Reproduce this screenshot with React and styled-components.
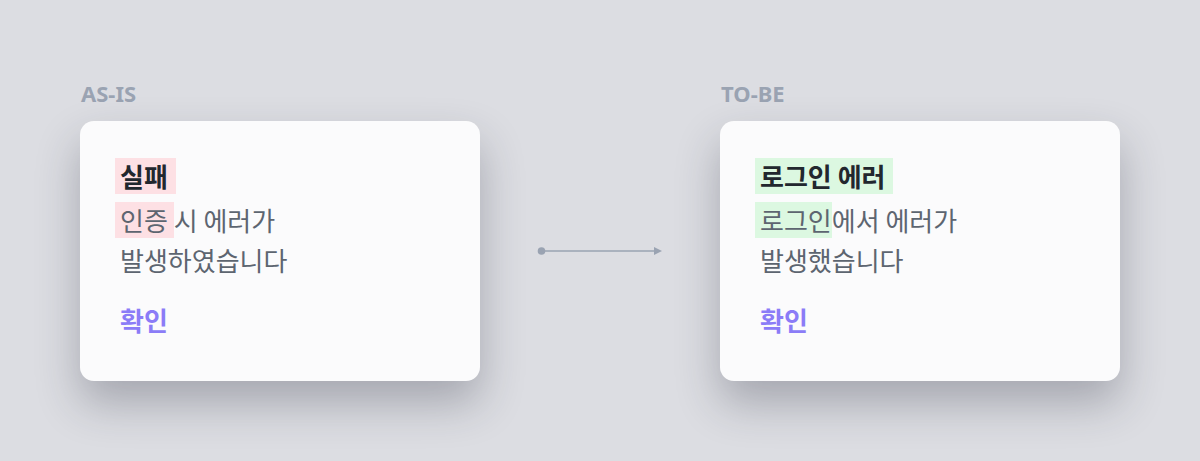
import React from "react";
import styled, { createGlobalStyle } from "styled-components";

const GlobalStyle = createGlobalStyle`
  html, body {
    margin: 0;
    padding: 0;
    background: #dcdde2;
  }
  body {
    font-family: "Noto Sans", "Noto Sans CJK KR", sans-serif;
  }
`;

const Page = styled.div`
  width: 1200px;
  height: 461px;
  box-sizing: border-box;
  padding: 79px 80px 0;
  display: flex;
  align-items: flex-start;
  background: #dcdde2;
`;

const Column = styled.div`
  width: 400px;
  display: flex;
  flex-direction: column;
`;

const Label = styled.div`
  font-family: "Noto Sans", sans-serif;
  font-size: 22px;
  font-weight: 700;
  line-height: 28px;
  color: #9aa3b2;
  margin-bottom: 14px;
  padding-left: 1px;
`;

const Card = styled.div`
  height: 260px;
  box-sizing: border-box;
  padding: 37px 35px 0;
  background: #fbfbfc;
  border-radius: 14px;
  box-shadow: 0 22px 44px rgba(40, 44, 60, 0.3);
  font-family: "Noto Sans CJK KR", "Noto Sans", sans-serif;
`;

const Title = styled.div`
  font-size: 26px;
  font-weight: 700;
  color: #22272e;
  line-height: 36px;
  height: 36px;
`;

const Mark = styled.span`
  display: inline-block;
  line-height: 36px;
  padding: 0 ${(p) => p.$right}px 0 5px;
  background: ${(p) => (p.$tone === "green" ? "#dcf8e1" : "#fde0e4")};
`;

const Body = styled.div`
  margin-top: 6px;
  font-size: 26px;
  font-weight: 400;
  color: #5d6570;
  line-height: 40px;
`;

const Line = styled.div`
  height: 40px;
  display: flex;
  align-items: center;
  white-space: pre;
  padding-left: ${(p) => (p.$indent ? 5 : 0)}px;
`;

const Confirm = styled.div`
  margin-top: 22px;
  padding-left: 5px;
  font-size: 26px;
  font-weight: 700;
  color: #8b7cf7;
  line-height: 36px;
`;

const ArrowBox = styled.div`
  width: 240px;
  height: 260px;
  margin-top: 42px;
  display: flex;
  align-items: center;
  justify-content: center;
`;

const Arrow = () => (
  <svg width="126" height="12" viewBox="0 0 126 12">
    <circle cx="4.5" cy="6" r="3.8" fill="#9aa3b2" />
    <line x1="5" y1="6" x2="118" y2="6" stroke="#9aa3b2" strokeWidth="1.3" />
    <path d="M117 2 L125 6 L117 10 Z" fill="#9aa3b2" />
  </svg>
);

const Dialog = ({ label, tone, title, titleRight, mark, rest, second }) => (
  <Column>
    <Label>{label}</Label>
    <Card>
      <Title>
        <Mark $tone={tone} $right={titleRight}>
          {title}
        </Mark>
      </Title>
      <Body>
        <Line>
          <Mark $tone={tone} $right={0}>
            {mark}
          </Mark>
          {rest}
        </Line>
        <Line $indent>{second}</Line>
      </Body>
      <Confirm>확인</Confirm>
    </Card>
  </Column>
);

export default function App() {
  return (
    <>
      <GlobalStyle />
      <Page>
        <Dialog
          label="AS-IS"
          tone="red"
          title="실패"
          titleRight={8}
          mark="인증 "
          rest="시 에러가"
          second="발생하였습니다"
        />
        <ArrowBox>
          <Arrow />
        </ArrowBox>
        <Dialog
          label="TO-BE"
          tone="green"
          title="로그인 에러"
          titleRight={7}
          mark="로그인"
          rest="에서 에러가"
          second="발생했습니다"
        />
      </Page>
    </>
  );
}
